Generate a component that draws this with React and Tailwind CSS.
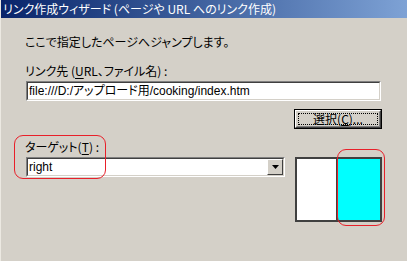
const sunkenOuter =
  "border border-t-[#808080] border-l-[#808080] border-b-white border-r-white";
const sunkenInner =
  "border border-t-[#404040] border-l-[#404040] border-b-[#d4d0c8] border-r-[#d4d0c8]";

const App = () => {
  return (
    <div className="relative w-[407px] h-[261px] overflow-hidden bg-[#d4d0c8] text-[12px] text-black font-['Noto_Sans_CJK_JP','Noto_Sans',sans-serif] [font-feature-settings:'palt'] border-l border-l-[#ece9e2]">
      {/* title bar */}
      <div className="h-[18px] pl-[2px] leading-[18px] text-white bg-gradient-to-r from-[#0a246a] to-[#7ea2d5] whitespace-nowrap">
        リンク作成ウィザード (ページや URL へのリンク作成)
      </div>

      <div className="pl-[24px] pr-[25px]">
        <p className="mt-[16px] leading-[16px]">ここで指定したページへジャンプします。</p>

        <p className="mt-[13px] leading-[16px]">
          リンク先 (<span className="underline underline-offset-2">U</span>RL、ファイル名) :
        </p>

        {/* url input */}
        <div className={`mt-[2px] ml-[1px] mr-[1px] h-[20px] ${sunkenOuter}`}>
          <div className={`h-full bg-white ${sunkenInner} pl-[1px] leading-[16px] font-['Liberation_Sans','Noto_Sans_CJK_JP',sans-serif] whitespace-nowrap`}>
            file:///D:/アップロード用/cooking/index.htm
          </div>
        </div>

        {/* select button */}
        <div className="flex justify-end mt-[8px]">
          <div className="w-[88px] h-[20px] border border-black">
            <div className="h-full border border-t-white border-l-white border-b-[#404040] border-r-[#404040]">
              <div className="h-full border border-b-[#808080] border-r-[#808080] border-t-[#d4d0c8] border-l-[#d4d0c8] p-[1px]">
                <div className="h-full border border-dotted border-black flex items-center justify-center leading-none">
                  選択(<span className="underline underline-offset-1">C</span>)...
                </div>
              </div>
            </div>
          </div>
        </div>

        <p className="mt-[10px] leading-[16px]">
          ターゲット(<span className="underline underline-offset-2">T</span>) :
        </p>

        <div className="flex mt-[2px]">
          {/* target select */}
          <div className={`ml-[1px] w-[259px] h-[20px] ${sunkenOuter}`}>
            <div className={`h-full bg-white ${sunkenInner} flex`}>
              <div className="flex-1 pl-[1px] leading-[16px] font-['Liberation_Sans',sans-serif]">right</div>
              <div className="w-[16px] h-full bg-[#d4d0c8] border border-t-white border-l-white border-b-[#404040] border-r-[#404040] flex items-center justify-center">
                <svg width="7" height="4" viewBox="0 0 7 4">
                  <path d="M0 0h7L3.5 4z" fill="#000" />
                </svg>
              </div>
            </div>
          </div>

          {/* frame preview */}
          <div className="ml-[10px] w-[87px] h-[65px] border-2 border-[#404040] flex">
            <div className="w-[41px] bg-white border-r-2 border-r-[#404040]" />
            <div className="flex-1 bg-[#00ffff]" />
          </div>
        </div>
      </div>

      {/* red annotation marks */}
      <div className="absolute left-[13px] top-[135px] w-[92px] h-[44px] border-[1.5px] border-[#e8202a] rounded-[9px]" />
      <div className="absolute left-[336px] top-[149px] w-[48px] h-[77px] border-[1.5px] border-[#e8202a] rounded-[9px]" />
    </div>
  );
};

export default App;
